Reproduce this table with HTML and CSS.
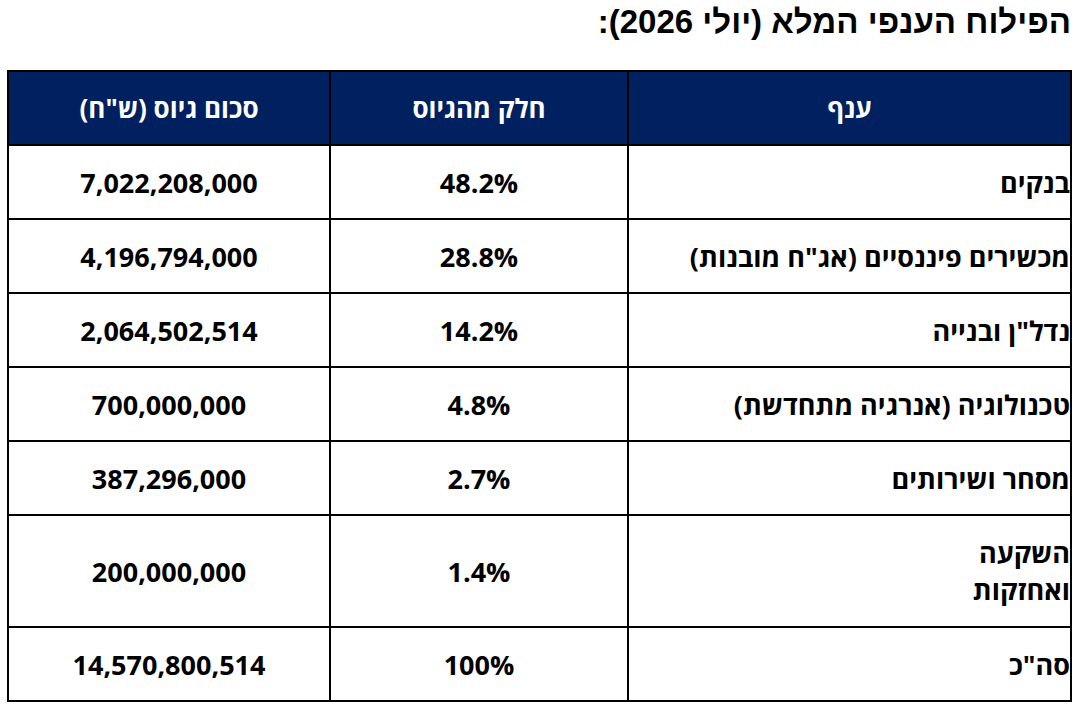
FILE: index.html
```html
<!DOCTYPE html>
<html lang="he" dir="rtl">
<head>
<meta charset="utf-8">
<link rel="stylesheet" href="styles.css">
</head>
<body>
<h2 class="title">הפילוח הענפי המלא (יולי 2026):</h2>
<table class="sectors">
  <colgroup>
    <col class="c-sector">
    <col class="c-share">
    <col class="c-amount">
  </colgroup>
  <thead>
    <tr class="head-row">
      <th>ענף</th>
      <th>חלק מהגיוס</th>
      <th>סכום גיוס (ש"ח)</th>
    </tr>
  </thead>
  <tbody>
    <tr><td class="name">בנקים</td><td class="num">48.2%</td><td class="num">7,022,208,000</td></tr>
    <tr><td class="name">מכשירים פיננסיים (אג"ח מובנות)</td><td class="num">28.8%</td><td class="num">4,196,794,000</td></tr>
    <tr><td class="name">נדל"ן ובנייה</td><td class="num">14.2%</td><td class="num">2,064,502,514</td></tr>
    <tr><td class="name">טכנולוגיה (אנרגיה מתחדשת)</td><td class="num">4.8%</td><td class="num">700,000,000</td></tr>
    <tr><td class="name">מסחר ושירותים</td><td class="num">2.7%</td><td class="num">387,296,000</td></tr>
    <tr class="tall"><td class="name">השקעה<br>ואחזקות</td><td class="num">1.4%</td><td class="num">200,000,000</td></tr>
    <tr><td class="name">סה"כ</td><td class="num">100%</td><td class="num">14,570,800,514</td></tr>
  </tbody>
</table>
</body>
</html>
```
FILE: styles.css
```css
html, body {
  margin: 0;
  padding: 0;
  background: #ffffff;
}
body {
  padding: 0 8px;
  color: #000000;
}
.title {
  margin: 0;
  height: 70px;
  padding-top: 2px;
  box-sizing: border-box;
  font-family: "Liberation Sans", Arial, sans-serif;
  font-weight: bold;
  font-size: 33px;
  line-height: 40px;
  text-align: right;
  padding-right: 1px;
}
.sectors {
  width: 1063px;
  border-collapse: collapse;
  table-layout: fixed;
  font-family: "Open Sans", "DejaVu Sans", sans-serif;
  font-weight: bold;
}
.c-sector { width: 443px; }
.c-share { width: 298px; }
.c-amount { width: 322px; }
.sectors th, .sectors td {
  border: 2px solid #000000;
  padding: 0;
  vertical-align: middle;
}
.head-row th {
  background: #002060;
  color: #ffffff;
  height: 72px;
  font-size: 26px;
  text-align: center;
}
.sectors td {
  height: 72px;
  font-size: 27px;
  line-height: 37px;
}
.sectors tr.tall td {
  height: 110px;
}
.name {
  text-align: right;
  padding-right: 1px;
}
.num {
  text-align: center;
}
```
